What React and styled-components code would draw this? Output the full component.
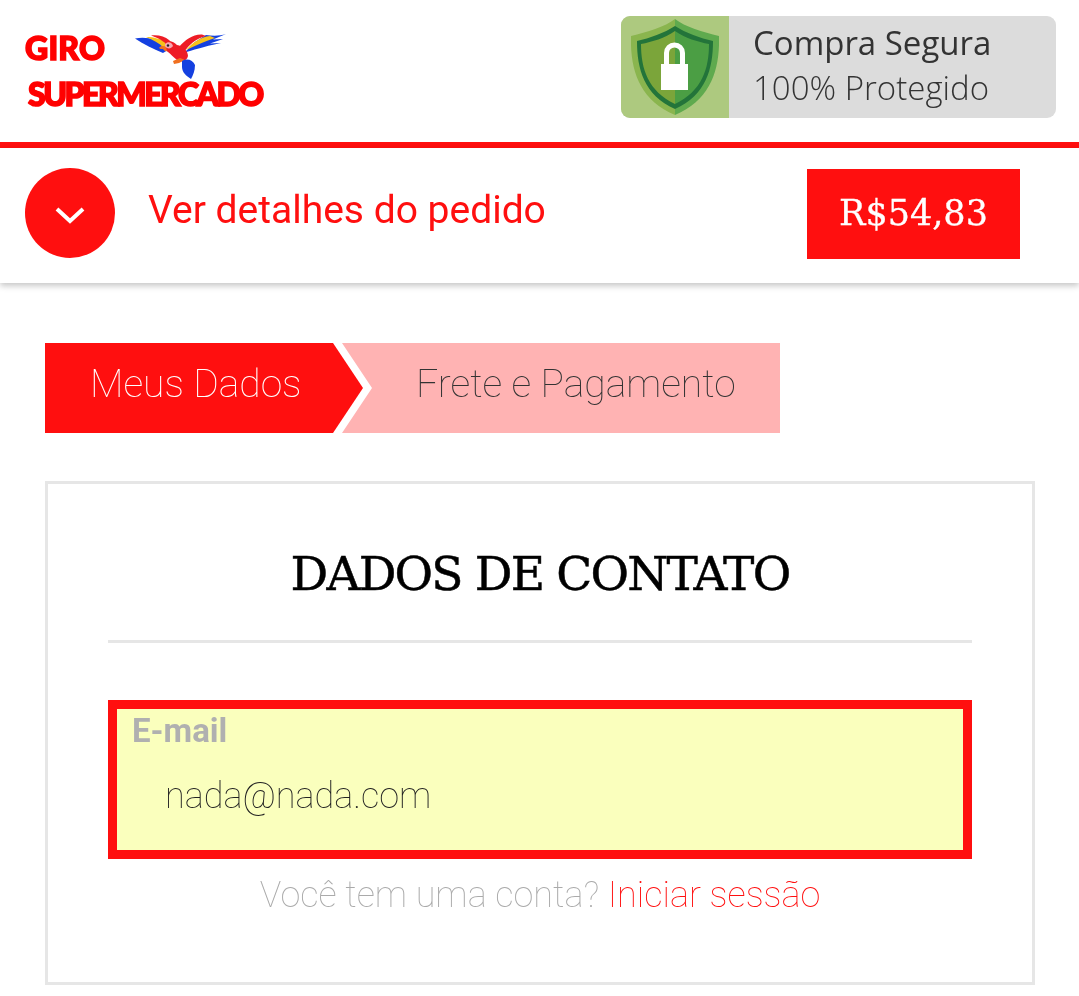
import React from 'react'
import styled, { createGlobalStyle } from 'styled-components'

const red = '#ff0f0f'

const GlobalStyle = createGlobalStyle`
  html, body {
    margin: 0;
    background: #fff;
    font-family: Roboto, sans-serif;
  }
  * {
    box-sizing: border-box;
  }
`

const Page = styled.div`
  width: 1079px;
  height: 996px;
  overflow: hidden;
  will-change: transform;
`

const Header = styled.header`
  display: flex;
  justify-content: space-between;
  align-items: flex-start;
  height: 148px;
  padding: 16px 23px 0 25px;
  border-bottom: 6px solid ${red};
`

const Logo = styled.div`
  display: flex;
  flex-direction: column;
  width: 240px;
  padding-top: 12px;
  color: #ff0000;
  font-family: Lato, sans-serif;
  font-weight: 900;
  -webkit-text-stroke: 1.6px #ff0000;
`

const LogoTop = styled.div`
  display: flex;
  align-items: flex-start;
  height: 47px;
`

const LogoGiro = styled.span`
  font-size: 32px;
  line-height: 40px;
  letter-spacing: 0.2px;
  width: 110px;
`

const LogoBottom = styled.span`
  font-size: 32px;
  line-height: 38px;
  letter-spacing: -2.5px;
  margin-left: 3px;
  white-space: nowrap;
`

const Parrot = styled.svg`
  flex: none;
  width: 92px;
  height: 46px;
  margin-top: 5px;
`

const Badge = styled.div`
  display: flex;
  width: 435px;
  height: 102px;
  border-radius: 9px;
  overflow: hidden;
  background: #dcdcdc;
`

const BadgeIcon = styled.div`
  display: flex;
  align-items: center;
  justify-content: center;
  width: 108px;
  background: #adc97f;
`

const BadgeText = styled.div`
  display: flex;
  flex-direction: column;
  justify-content: center;
  padding: 0 0 4px 24px;
  color: #333;
  font-family: "Open Sans", sans-serif;
  font-size: 33px;
  line-height: 45px;
`

const BadgeSub = styled.span`
  font-weight: 300;
`

const SummaryBar = styled.div`
  display: flex;
  align-items: center;
  height: 135px;
  padding: 0 59px 5px 25px;
  background: #fff;
  box-shadow: 0 3px 6px rgba(0, 0, 0, 0.22);
`

const Toggle = styled.div`
  display: flex;
  align-items: center;
  justify-content: center;
  flex: none;
  width: 90px;
  height: 90px;
  padding-top: 3px;
  border-radius: 50%;
  background: ${red};
`

const ToggleLabel = styled.span`
  flex: 1;
  margin: -6px 0 0 33px;
  color: ${red};
  font-size: 39px;
`

const Price = styled.div`
  display: flex;
  align-items: center;
  justify-content: center;
  width: 213px;
  height: 90px;
  margin-top: 2px;
  padding-bottom: 2px;
  background: ${red};
  color: #fff;
  font-family: "DejaVu Serif", serif;
  font-size: 35px;
  -webkit-text-stroke: 0.3px #fff;
`

const Steps = styled.div`
  display: flex;
  margin: 60px 0 0 45px;
  height: 90px;
`

const Step = styled.div`
  display: flex;
  align-items: center;
  height: 100%;
  font-size: 39px;
  font-weight: 100;
  padding-bottom: 8px;
`

const StepActive = styled(Step)`
  width: 318px;
  padding-left: 45px;
  background: ${red};
  color: #fff;
  clip-path: polygon(0 0, 288px 0, 100% 50%, 288px 100%, 0 100%);
`

const StepNext = styled(Step)`
  width: 438px;
  margin-left: -21px;
  padding-left: 74px;
  background: #ffb3b3;
  color: #333;
  clip-path: polygon(0 0, 100% 0, 100% 100%, 0 100%, 30px 50%);
`

const Card = styled.section`
  width: 990px;
  height: 504px;
  margin: 48px 0 0 45px;
  padding: 0 60px;
  border: 3px solid #e6e6e6;
`

const Title = styled.h2`
  height: 159px;
  margin: 0;
  padding-top: 60px;
  border-bottom: 3px solid #e6e6e6;
  color: #000;
  font-family: "DejaVu Serif", serif;
  font-size: 47px;
  font-weight: 400;
  line-height: 60px;
  letter-spacing: -1.8px;
  text-align: center;
  white-space: nowrap;
  -webkit-text-stroke: 0.5px #000;
`

const Field = styled.label`
  display: block;
  height: 159px;
  margin-top: 57px;
  padding: 4px 0 0 15px;
  border: 9px solid ${red};
  background: #faffbd;
`

const FieldLabel = styled.span`
  display: block;
  color: #b0b0b0;
  font-size: 33px;
  font-weight: 700;
  line-height: 36px;
`

const FieldInput = styled.input`
  display: block;
  width: 100%;
  margin-top: 22px;
  padding: 0 0 0 33px;
  border: 0;
  outline: 0;
  background: transparent;
  color: #222;
  font-family: Roboto, sans-serif;
  font-size: 36px;
  font-weight: 100;
  line-height: 50px;
`

const LoginHint = styled.p`
  margin: 13px 0 0;
  color: #aaa;
  font-size: 36px;
  font-weight: 100;
  line-height: 46px;
  text-align: center;
`

const LoginLink = styled.a`
  color: ${red};
`

const ParrotDrawing = () => (
  <Parrot viewBox="0 0 92 46">
    <path d="M0 5.5 C8 4 14 5 20 7 L36 15 L28 20 C18 16 8 11 0 5.5Z" fill="#1440e0" />
    <path d="M11 4 C19 4 26 6 31 9 L36 15 L29 15 C24 10 18 7 11 4Z" fill="#f7c21a" />
    <path d="M16 2.5 C23 1.5 30 3.5 34 7 L40 13 L33 13 C29 8 23 5 16 2.5Z" fill="#ee1c25" />
    <path d="M91 1 C85 3 78 3 71 2 L60 9 L49 20 C58 17 67 14 86 10 L75 10.5 L88 6 L78 6.5 Z" fill="#1440e0" />
    <path d="M75 3 C66 4 58 9 51 17 C60 13 68 9 80 5Z" fill="#f7c21a" />
    <path d="M67 1.5 C58 1 50 7 44 14 L49 19 C54 12 60 6 71 3Z" fill="#ee1c25" />
    <path d="M31 9 C35 7 39 9 42 12 C48 13 53 18 53 23 C52 28 47 29 42 27 C38 24 36 21 33 19 C30 17 29 13 31 9Z" fill="#ee1c25" />
    <path d="M30 11 C33 8 37 9 38 13 C36 16 33 16 30 14Z" fill="#f7a6b0" />
    <circle cx="33" cy="12.5" r="1.2" fill="#222" />
    <path d="M24 15 C26 12 29 13 31 14 L32 18 C30 19 29 17 28 16 C26 16 25 16 24 15Z" fill="#f07020" />
    <path d="M38 28 L45 25 L50 27 L44 30 L39 31Z" fill="#f07020" />
    <path d="M47 28 C52 25 58 27 60 32 C60 38 58 42 56 46 C51 43 47 39 47 34 Z" fill="#1440e0" />
  </Parrot>
)

const ShieldIcon = () => (
  <svg width="88" height="96" viewBox="0 0 88 96">
    <path d="M44 0 C54 8 72 13 88 17 C89 50 80 81 44 96Z" fill="#5faa4e" />
    <path d="M44 0 C34 8 16 13 0 17 C-1 50 8 81 44 96Z" fill="#8ab54e" />
    <path d="M44 7 C55 14 69 19 82 22 C82 50 75 76 44 90 C13 76 6 50 6 22 C19 19 33 14 44 7Z" fill="#23743a" />
    <path d="M44 12 C34 19 21 23 10 25 C10 50 17 72 44 85Z" fill="#7ba53a" />
    <path d="M44 12 C54 19 67 23 78 25 C78 50 71 72 44 85Z" fill="#4b9e44" />
    <path d="M35.5 48 V34 a8 8 0 0 1 16 0 V48" fill="none" stroke="#fff" strokeWidth="5" />
    <rect x="30" y="45" width="27" height="26" fill="#fff" />
  </svg>
)

const ChevronIcon = () => (
  <svg width="30" height="18" viewBox="0 0 30 18">
    <path d="M2 3 L15 15 L28 3" fill="none" stroke="#fff" strokeWidth="4" />
  </svg>
)

const App = () => (
  <Page>
    <GlobalStyle />
    <Header>
      <Logo>
        <LogoTop>
          <LogoGiro>GIRO</LogoGiro>
          <ParrotDrawing />
        </LogoTop>
        <LogoBottom>SUPERMERCADO</LogoBottom>
      </Logo>
      <Badge>
        <BadgeIcon>
          <ShieldIcon />
        </BadgeIcon>
        <BadgeText>
          <span>Compra Segura</span>
          <BadgeSub>100% Protegido</BadgeSub>
        </BadgeText>
      </Badge>
    </Header>
    <SummaryBar>
      <Toggle>
        <ChevronIcon />
      </Toggle>
      <ToggleLabel>Ver detalhes do pedido</ToggleLabel>
      <Price>R$54,83</Price>
    </SummaryBar>
    <Steps>
      <StepActive>Meus Dados</StepActive>
      <StepNext>Frete e Pagamento</StepNext>
    </Steps>
    <Card>
      <Title>DADOS DE CONTATO</Title>
      <Field>
        <FieldLabel>E-mail</FieldLabel>
        <FieldInput defaultValue="nada@nada.com" />
      </Field>
      <LoginHint>
        Você tem uma conta? <LoginLink>Iniciar sessão</LoginLink>
      </LoginHint>
    </Card>
  </Page>
)

export default App
